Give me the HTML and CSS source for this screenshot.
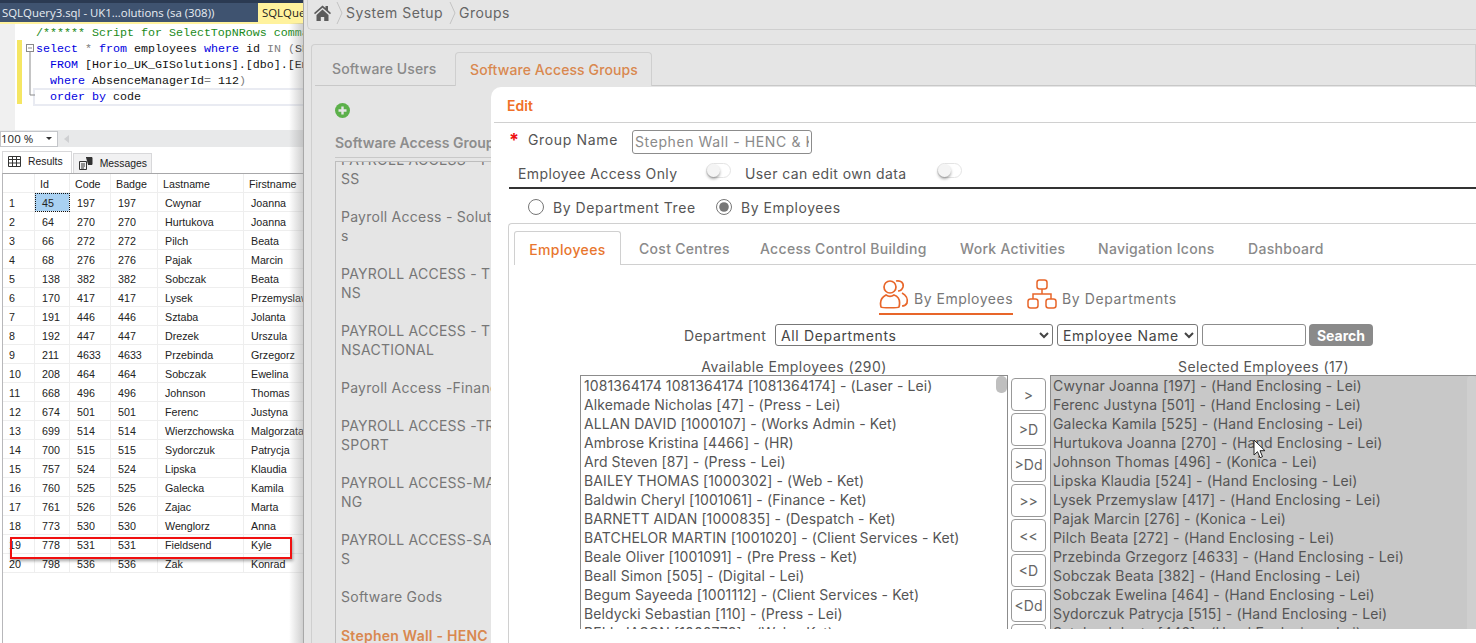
FILE: index.html
```html
<!DOCTYPE html>
<html lang="en">
<head>
<meta charset="utf-8">
<title>Groups</title>
<link rel="stylesheet" href="styles.css">
</head>
<body>
<div class="desktop">
  <section class="ssms">
    <div class="ssms-top"></div>
    <div class="ssms-tabs">
      <span class="doc-tab">SQLQuery3.sql - UK1...olutions (sa (308))</span>
      <span class="doc-tab-active">SQLQuery4</span>
    </div>
    <div class="editor">
      <div class="gutter"></div>
      <div class="changebar"></div>
      <div class="fold"><svg width="10" height="60" viewBox="0 0 10 60"><rect x=".5" y=".5" width="7" height="7" fill="#fff" stroke="#8a8a8a"/><path d="M2 4h4M4 8v43h5" fill="none" stroke="#8a8a8a"/></svg></div>
      <div class="code">
        <div class="cl cm">/****** Script for SelectTopNRows command</div>
        <div class="cl"><b>select</b> <i>*</i> <b>from</b> employees <b>where</b> id <i>IN</i> <i>(</i>SELECT</div>
        <div class="cl ind"><b>FROM</b> [Horio_UK_GISolutions].[dbo].[Emplo</div>
        <div class="cl ind"><b>where</b> AbsenceManagerId<i>=</i> 112<i>)</i></div>
        <div class="cl ind line-on"><b>order by</b> code</div>
      </div>
    </div>
    <div class="zoombar"><span class="zoombox">100 %<span class="caret"></span></span><span class="sb-arrow"></span></div>
    <div class="result-tabs">
      <span class="rtab active"><svg width="13" height="11" viewBox="0 0 13 11"><path d="M.5.5h12v10H.5zM.5 3.500h12M.5 7h12M4.500 .5v10M8.500 .5v10" fill="none" stroke="#333"/></svg>Results</span>
      <span class="rtab"><svg width="14" height="13" viewBox="0 0 14 13"><path d="M.5 4.500h7v8h-7zM2 7h4M2 9h4M2 11h3" fill="none" stroke="#333"/><path d="M7 .5h6v7H9" fill="#333" stroke="#333"/></svg>Messages</span>
    </div>
    <div class="grid">
      <div class="row head"><span></span><span>Id</span><span>Code</span><span>Badge</span><span>Lastname</span><span>Firstname</span></div>
      <div class="row"><span>1</span><span class="cell-sel">45</span><span>197</span><span>197</span><span>Cwynar</span><span>Joanna</span></div>
      <div class="row"><span>2</span><span>64</span><span>270</span><span>270</span><span>Hurtukova</span><span>Joanna</span></div>
      <div class="row"><span>3</span><span>66</span><span>272</span><span>272</span><span>Pilch</span><span>Beata</span></div>
      <div class="row"><span>4</span><span>68</span><span>276</span><span>276</span><span>Pajak</span><span>Marcin</span></div>
      <div class="row"><span>5</span><span>138</span><span>382</span><span>382</span><span>Sobczak</span><span>Beata</span></div>
      <div class="row"><span>6</span><span>170</span><span>417</span><span>417</span><span>Lysek</span><span>Przemyslaw</span></div>
      <div class="row"><span>7</span><span>191</span><span>446</span><span>446</span><span>Sztaba</span><span>Jolanta</span></div>
      <div class="row"><span>8</span><span>192</span><span>447</span><span>447</span><span>Drezek</span><span>Urszula</span></div>
      <div class="row"><span>9</span><span>211</span><span>4633</span><span>4633</span><span>Przebinda</span><span>Grzegorz</span></div>
      <div class="row"><span>10</span><span>208</span><span>464</span><span>464</span><span>Sobczak</span><span>Ewelina</span></div>
      <div class="row"><span>11</span><span>668</span><span>496</span><span>496</span><span>Johnson</span><span>Thomas</span></div>
      <div class="row"><span>12</span><span>674</span><span>501</span><span>501</span><span>Ferenc</span><span>Justyna</span></div>
      <div class="row"><span>13</span><span>699</span><span>514</span><span>514</span><span>Wierzchowska</span><span>Malgorzata</span></div>
      <div class="row"><span>14</span><span>700</span><span>515</span><span>515</span><span>Sydorczuk</span><span>Patrycja</span></div>
      <div class="row"><span>15</span><span>757</span><span>524</span><span>524</span><span>Lipska</span><span>Klaudia</span></div>
      <div class="row"><span>16</span><span>760</span><span>525</span><span>525</span><span>Galecka</span><span>Kamila</span></div>
      <div class="row"><span>17</span><span>761</span><span>526</span><span>526</span><span>Zajac</span><span>Marta</span></div>
      <div class="row"><span>18</span><span>773</span><span>530</span><span>530</span><span>Wenglorz</span><span>Anna</span></div>
      <div class="row"><span>19</span><span>778</span><span>531</span><span>531</span><span>Fieldsend</span><span>Kyle</span></div>
      <div class="row"><span>20</span><span>798</span><span>536</span><span>536</span><span>Zak</span><span>Konrad</span></div>
    </div>
    <div class="edge-shadow"></div>
    <div class="redbox"></div>
  </section>

  <section class="app">
    <div class="crumbs">
      <svg class="home" width="17" height="16" viewBox="0 0 17 16"><path d="M8.500 .5 0 8l1 1.200 7.500-6.500L16 9.200 17 8l-3-2.700V1h-2.500v2.100zM2.500 10v6h4.300v-4h3.400v4h4.300v-6L8.500 4.500z" fill="#5c5c5c"/></svg>
      <svg class="chev" width="7" height="24" viewBox="0 0 7 24"><path d="M1 1l5 11-5 11" fill="none" stroke="#c4c4c4"/></svg>
      <span>System Setup</span>
      <svg class="chev" width="7" height="24" viewBox="0 0 7 24"><path d="M1 1l5 11-5 11" fill="none" stroke="#c4c4c4"/></svg>
      <span>Groups</span>
    </div>
    <div class="card">
      <div class="card-tabs">
        <span class="ctab">Software Users</span>
        <span class="ctab active">Software Access Groups</span>
      </div>
      <div class="card-body">
        <svg class="plus" width="15" height="15" viewBox="0 0 15 15"><circle cx="7.500" cy="7.500" r="7.500" fill="#5cb04a"/><path d="M7.500 3.500v8M3.500 7.500h8" stroke="#e5e5e5" stroke-width="2.400"/></svg>
        <div class="glabel">Software Access Groups</div>
        <div class="glist">
          <div class="gitem first">PAYROLL ACCESS - PROCESS<br>SS</div>
          <div class="gitem">Payroll Access - Solutions<br>s</div>
          <div class="gitem">PAYROLL ACCESS - TRANSACTIONS<br>NS</div>
          <div class="gitem">PAYROLL ACCESS - TRANSACTIONAL<br>NSACTIONAL</div>
          <div class="gitem single">Payroll Access -Finance</div>
          <div class="gitem">PAYROLL ACCESS -TRANSPORT<br>SPORT</div>
          <div class="gitem">PAYROLL ACCESS-MARKETING<br>NG</div>
          <div class="gitem">PAYROLL ACCESS-SALES<br>S</div>
          <div class="gitem single">Software Gods</div>
          <div class="gitem single chosen-item">Stephen Wall - HENC &amp; KET</div>
        </div>
      </div>
    </div>

    <div class="modal">
      <div class="modal-title">Edit</div>
      <div class="form-row name-row">
        <span class="req">*</span>
        <label class="name-label" for="gn">Group Name</label>
        <input class="txt name-input" id="gn" type="text" value="Stephen Wall - HENC &amp; KET">
      </div>
      <div class="form-row toggle-row">
        <span class="t1">Employee Access Only</span>
        <span class="toggle t1b"></span>
        <span class="t2">User can edit own data</span>
        <span class="toggle"></span>
      </div>
      <div class="form-row radio-row">
        <label class="radio r1"><input type="radio" name="m">By Department Tree</label>
        <label class="radio"><input type="radio" name="m" checked>By Employees</label>
      </div>
      <div class="panel">
        <div class="ptabs">
          <span class="ptab active">Employees</span>
          <span class="ptab p2">Cost Centres</span>
          <span class="ptab p3">Access Control Building</span>
          <span class="ptab p4">Work Activities</span>
          <span class="ptab p5">Navigation Icons</span>
          <span class="ptab p6">Dashboard</span>
        </div>
        <div class="subtabs">
          <span class="stab on">
            <svg width="30" height="30" viewBox="0 0 30 30" fill="none" stroke="#e8662a" stroke-width="1.700"><circle cx="11" cy="8" r="6"/><path d="M2 28c-2-8 3-11 5-12 3 2 5 2 8 0 3 1 7 4 5 12-1 1-17 1-18 0z"/><path d="M17 2c5-1 8 2 7 6-1 3-3 4-5 4M23 14c4 2 6 6 5 10-1 2-3 3-5 3"/></svg>
            By Employees
          </span>
          <span class="stab">
            <svg width="30" height="30" viewBox="0 0 30 30" fill="none" stroke="#e8662a" stroke-width="1.500"><rect x="10" y="1" width="10" height="9" rx="2.500"/><rect x="1" y="20" width="10" height="9" rx="2.500"/><rect x="19" y="20" width="10" height="9" rx="2.500"/><path d="M15 10v5M6 20v-5h18v5"/></svg>
            By Departments
          </span>
        </div>
        <div class="filter">
          <label class="dept-label" for="dp">Department</label>
          <select class="sel sel-dept" id="dp"><option>All Departments</option></select>
          <select class="sel sel-name"><option>Employee Name</option></select>
          <input class="txt search-input" type="text">
          <button class="search" type="button">Search</button>
        </div>
        <div class="lists">
          <div class="col-left">
            <div class="list-title">Available Employees (290)</div>
            <div class="list">
              <div>1081364174 1081364174 [1081364174] - (Laser - Lei)</div>
              <div>Alkemade Nicholas [47] - (Press - Lei)</div>
              <div>ALLAN DAVID [1000107] - (Works Admin - Ket)</div>
              <div>Ambrose Kristina [4466] - (HR)</div>
              <div>Ard Steven [87] - (Press - Lei)</div>
              <div>BAILEY THOMAS [1000302] - (Web - Ket)</div>
              <div>Baldwin Cheryl [1001061] - (Finance - Ket)</div>
              <div>BARNETT AIDAN [1000835] - (Despatch - Ket)</div>
              <div>BATCHELOR MARTIN [1001020] - (Client Services - Ket)</div>
              <div>Beale Oliver [1001091] - (Pre Press - Ket)</div>
              <div>Beall Simon [505] - (Digital - Lei)</div>
              <div>Begum Sayeeda [1001112] - (Client Services - Ket)</div>
              <div>Beldycki Sebastian [110] - (Press - Lei)</div>
              <div>BELL JASON [1000778] - (Web - Ket)</div>
              <span class="thumb"></span>
            </div>
          </div>
          <div class="movers">
            <button type="button">&gt;</button>
            <button type="button">&gt;D</button>
            <button type="button">&gt;Dd</button>
            <button type="button">&gt;&gt;</button>
            <button type="button">&lt;&lt;</button>
            <button type="button">&lt;D</button>
            <button type="button">&lt;Dd</button>
            <button type="button">&lt;</button>
          </div>
          <div class="col-right">
            <div class="list-title">Selected Employees (17)</div>
            <div class="list chosen">
              <div>Cwynar Joanna [197] - (Hand Enclosing - Lei)</div>
              <div>Ferenc Justyna [501] - (Hand Enclosing - Lei)</div>
              <div>Galecka Kamila [525] - (Hand Enclosing - Lei)</div>
              <div>Hurtukova Joanna [270] - (Hand Enclosing - Lei)</div>
              <div>Johnson Thomas [496] - (Konica - Lei)</div>
              <div>Lipska Klaudia [524] - (Hand Enclosing - Lei)</div>
              <div>Lysek Przemyslaw [417] - (Hand Enclosing - Lei)</div>
              <div>Pajak Marcin [276] - (Konica - Lei)</div>
              <div>Pilch Beata [272] - (Hand Enclosing - Lei)</div>
              <div>Przebinda Grzegorz [4633] - (Hand Enclosing - Lei)</div>
              <div>Sobczak Beata [382] - (Hand Enclosing - Lei)</div>
              <div>Sobczak Ewelina [464] - (Hand Enclosing - Lei)</div>
              <div>Sydorczuk Patrycja [515] - (Hand Enclosing - Lei)</div>
              <div>Sztaba Jolanta [446] - (Hand Enclosing - Lei)</div>
              <span class="thumb light"></span>
            </div>
          </div>
        </div>
      </div>
    </div>
    <svg class="cursor" width="13" height="20" viewBox="0 0 13 20"><path d="M1 1v15l3.500-3.300 2.500 6 2.500-1-2.500-6H12z" fill="#fff" stroke="#222"/></svg>
  </section>
</div>
</body>
</html>
```

FILE: styles.css
```css
* { box-sizing: border-box; }
html, body { margin: 0; height: 643px; overflow: hidden; background: #fff; }
.desktop { display: flex; width: 1476px; height: 643px; overflow: hidden; }

/* SSMS window */
.ssms { position: relative; flex: 0 0 303px; height: 643px; overflow: hidden; background: #fff; font-family: "Liberation Sans", Arial, sans-serif; }
.ssms-top { height: 3px; background: #2b3a52; }
.ssms-tabs { display: flex; height: 19px; background: #3f5370; font-family: "Open Sans", sans-serif; font-size: 11.4px; line-height: 19px; white-space: nowrap; overflow: hidden; }
.doc-tab { flex: 0 0 258px; padding-left: 2px; color: #e8edf3; }
.doc-tab-active { flex: 1; padding-left: 4px; background: #fff29d; color: #222; }
.editor { position: relative; height: 108px; border-top: 2px solid #fff29d; overflow: hidden; }
.gutter { position: absolute; left: 0; top: 0; bottom: 0; width: 15px; background: #f0f0f0; }
.changebar { position: absolute; left: 17px; top: 16px; width: 5px; height: 64px; background: #f5e663; }
.fold { position: absolute; left: 26px; top: 20px; line-height: 0; }
.code { padding: 1px 0 0 36px; font-family: "Liberation Mono", monospace; font-size: 11.67px; line-height: 16px; color: #111; }
.cl { white-space: pre; }
.cl b { font-weight: normal; color: #0000e0; }
.cl i { font-style: normal; color: #808080; }
.cm { color: #1a8a1a; }
.ind { margin-left: 14px; }
.line-on { margin-left: -2px; padding-left: 16px; width: 270px; outline: 2px solid #e9ebf2; outline-offset: -1px; }
.zoombar { display: flex; align-items: center; gap: 6px; height: 17px; background: #e8e9ea; }
.zoombox { display: flex; align-items: center; justify-content: space-between; width: 58px; height: 16px; padding: 0 5px 0 0; background: #fff; border: 1px solid #c4c6ca; font-family: "Open Sans", sans-serif; font-size: 11.5px; color: #222; }
.caret { width: 0; height: 0; border: 3px solid transparent; border-top: 3px solid #333; border-bottom: 0; }
.sb-arrow { width: 0; height: 0; border: 4px solid transparent; border-right: 5px solid #cfd0d2; border-left: 0; }
.result-tabs { display: flex; align-items: flex-end; height: 26px; padding: 4px 0 0 2px; background: #fff; }
.rtab { display: flex; align-items: center; gap: 7px; height: 20px; padding: 0 4px 0 5px; margin-right: 1px; background: #f1f1f2; border: 1px solid #d8d8da; border-bottom: 0; font-size: 10.4px; color: #222; }
.rtab.active { height: 22px; gap: 7px; padding: 0 8px 2px 5px; background: #fff; }
.grid { margin: 0 0 0 2px; height: 470px; border-top: 1px solid #a7a7a9; border-left: 1px solid #b7b7ba; background: #fff; }
.row { display: grid; grid-template-columns: 32px 35px 41px 47px 86px 60px; height: 19px; font-size: 10.7px; line-height: 20px; color: #222; white-space: nowrap; overflow: hidden; }
.row span { padding-left: 7px; border-right: 1px solid #eeeeee; border-bottom: 1px solid #eeeeee; overflow: hidden; }
.row span:first-child { padding-left: 6px; }
.row.head span { padding-left: 5px; }
.cell-sel { background: #a9d1f2; outline: 1px dotted #111; outline-offset: -1px; }
.edge-shadow { position: absolute; right: 0; top: 23px; bottom: 0; width: 14px; background: linear-gradient(to right, rgba(150,150,150,0), rgba(150,150,150,.45)); }
.redbox { position: absolute; left: 10px; top: 537px; width: 282px; height: 22px; border: 2px solid #f01010; box-shadow: 1px 2px 3px rgba(0,0,0,.35); }

/* web app */
.app { position: relative; flex: 1; height: 643px; overflow: hidden; background: #e5e5e5; border-left: 1px solid #a8a8a8; font-family: Inter, "Noto Sans", sans-serif; color: #666; }
.crumbs { display: flex; align-items: center; height: 30px; margin-left: 3px; padding: 0 0 4px 6px; border: 1px solid #cfcfcf; border-width: 0 0 1px 1px; border-bottom-left-radius: 5px; font-size: 14px; letter-spacing: .45px; }
.home { margin-right: 5px; margin-top: 1px; }
.chev { margin-right: 3px; }
.crumbs span { margin-right: 6px; }
.card { height: 620px; margin: 14px 0 0 7px; border: 1px solid #cfcfcf; border-bottom: 0; border-top-left-radius: 4px; padding: 7px 0 0 3px; }
.card-tabs { display: flex; height: 34px; border-bottom: 1px solid #c8c8c8; }
.ctab { padding: 0 0 0 17px; width: 140px; font-size: 14px; font-weight: 500; line-height: 33px; letter-spacing: .1px; color: #8a8a8a; white-space: nowrap; }
.ctab.active { width: 197px; height: 34px; padding-left: 14px; color: #d9884f; background: #e5e5e5; border: 1px solid #cfcfcf; border-bottom: 0; border-radius: 4px 4px 0 0; }
.card-body { padding: 17px 0 0 20px; }
.plus { display: block; }
.glabel { width: 156px; height: 24px; margin-top: 16px; border-bottom: 1px solid #c8c8c8; font-size: 14px; font-weight: 600; line-height: 18px; letter-spacing: 0; color: #8d8d8d; white-space: nowrap; overflow: hidden; }
.glist { width: 156px; height: 490px; margin-top: 3px; border-left: 1px solid #bdbdbd; border-top: 1px solid #bdbdbd; padding-left: 5px; font-size: 14px; line-height: 19px; color: #777; overflow: hidden; white-space: nowrap; }
.gitem { height: 57px; letter-spacing: .25px; }
.gitem.first { margin-top: -12px; }
.gitem.single { height: 38px; }
.gitem.chosen-item { margin-top: 1px; color: #d9884f; font-weight: 600; }

/* modal */
.modal { position: absolute; left: 187px; top: 87px; right: 0; bottom: 0; overflow: hidden; padding: 0 0 0 3px; background: #fff; border-top-left-radius: 10px; color: #555; font-size: 14px; letter-spacing: .4px; }
.modal-title { height: 36px; padding-left: 13px; border-bottom: 1px solid #d0d0d0; font-size: 14px; font-weight: 600; line-height: 38px; letter-spacing: 0; color: #f07028; }
.form-row { display: flex; align-items: center; white-space: nowrap; }
.name-row { height: 33px; margin-left: 15px; padding-top: 2px; }
.req { width: 19px; margin-top: -3px; color: #ee1111; font-size: 18px; font-weight: 700; letter-spacing: 0; }
.name-label { width: 104px; margin-top: -3px; letter-spacing: .65px; color: #555; }
.txt { border: 1px solid #8c8c8c; border-radius: 3px; background: #fff; font: inherit; letter-spacing: .6px; color: #8a8a8a; outline: none; }
.name-input { width: 180px; height: 24px; padding: 0 2px; margin-top: 2px; }
.toggle-row { height: 33px; margin-left: 15px; padding: 3px 0 0 9px; border-bottom: 2px solid #333; }
.t1 { width: 188px; }
.t1b { margin-right: 14px; }
.t2 { width: 192px; }
.toggle { position: relative; display: block; width: 25px; height: 15px; margin-top: -6px; border: 1px solid #e4e4e4; border-radius: 8px; background: #fff; }
.toggle::before { content: ""; position: absolute; left: 0; top: 0; width: 13px; height: 13px; border-radius: 50%; background: #f4f4f4; box-shadow: 0 2px 3px rgba(0,0,0,.35); }
.radio-row { height: 34px; margin-left: 34px; padding-top: 2px; letter-spacing: .55px; }
.radio { display: flex; align-items: center; gap: 9px; }
.radio input { width: 16px; height: 16px; margin: 0; accent-color: #777; }
.r1 { width: 188px; }
.panel { margin-left: 14px; height: 420px; padding: 7px 0 0 5px; border: 1px solid #d0d0d0; border-width: 1px 0 0 1px; border-top-left-radius: 4px; }
.ptabs { display: flex; height: 34px; border-bottom: 1px solid #d0d0d0; font-weight: 500; color: #8a8a8a; white-space: nowrap; }
.ptab { display: block; line-height: 35px; letter-spacing: .3px; }
.ptab.active { width: 107px; height: 34px; text-align: center; color: #e8762e; background: #fff; border: 1px solid #d0d0d0; border-bottom: 0; border-radius: 3px 3px 0 0; letter-spacing: .4px; }
.p2 { margin-left: 18px; width: 121px; }
.p3 { width: 200px; }
.p4 { width: 138px; }
.p5 { width: 150px; }
.p6 { width: 100px; }
.subtabs { display: flex; gap: 14px; height: 50px; padding: 15px 0 0 365px; }
.stab { display: flex; align-items: flex-end; gap: 5px; height: 35px; padding-bottom: 6px; border-bottom: 2px solid transparent; color: #777; letter-spacing: .6px; line-height: 17px; white-space: nowrap; }
.stab.on { border-bottom-color: #e8662a; letter-spacing: .5px; }
.stab svg { margin-bottom: -2px; }
.filter { display: flex; align-items: center; gap: 4px; height: 24px; margin-top: 8px; padding-left: 170px; white-space: nowrap; }
.dept-label { width: 90px; margin-right: -3px; color: #555; }
.sel { height: 22px; padding: 0 0 0 1px; border: 1px solid #777; border-radius: 3px; background: #fff; font: inherit; letter-spacing: .65px; color: #444; }
.sel-dept { width: 278px; }
.sel-name { width: 141px; }
.search-input { width: 104px; height: 22px; }
.search { width: 64px; height: 22px; margin-left: -1px; padding: 0; border: 0; border-radius: 4px; background: #8a8a8a; color: #fff; font: inherit; font-weight: 700; letter-spacing: 0; }
.lists { display: flex; gap: 3px; padding: 10px 0 0 66px; }
.col-left { flex: 0 0 428px; }
.col-right { flex: 0 0 427px; }
.list-title { height: 18px; text-align: center; line-height: 19px; color: #555; white-space: nowrap; }
.list { position: relative; height: 254px; padding-left: 3px; overflow: hidden; border: 1px solid #8c8c8c; border-bottom: 0; line-height: 19px; letter-spacing: .1px; color: #555; white-space: nowrap; }
.list.chosen { background: #c8c8c8; padding-left: 2px; letter-spacing: .17px; }
.thumb { position: absolute; right: 0; top: 0; width: 11px; height: 17px; border-radius: 5px; background: #bfbfbf; }
.thumb.light { width: 9px; height: 300px; border-radius: 4px 4px 0 0; background: #cfcfcf; }
.movers { flex: 0 0 36px; display: flex; flex-direction: column; gap: 2px; height: 251px; margin-top: 21px; overflow: hidden; }
.movers button { flex: 0 0 33.200px; width: 35px; padding: 0; border: 1px solid #999; border-radius: 4px; background: #fff; font: inherit; letter-spacing: 0; color: #666; }
.cursor { position: absolute; left: 949px; top: 439px; }
```
